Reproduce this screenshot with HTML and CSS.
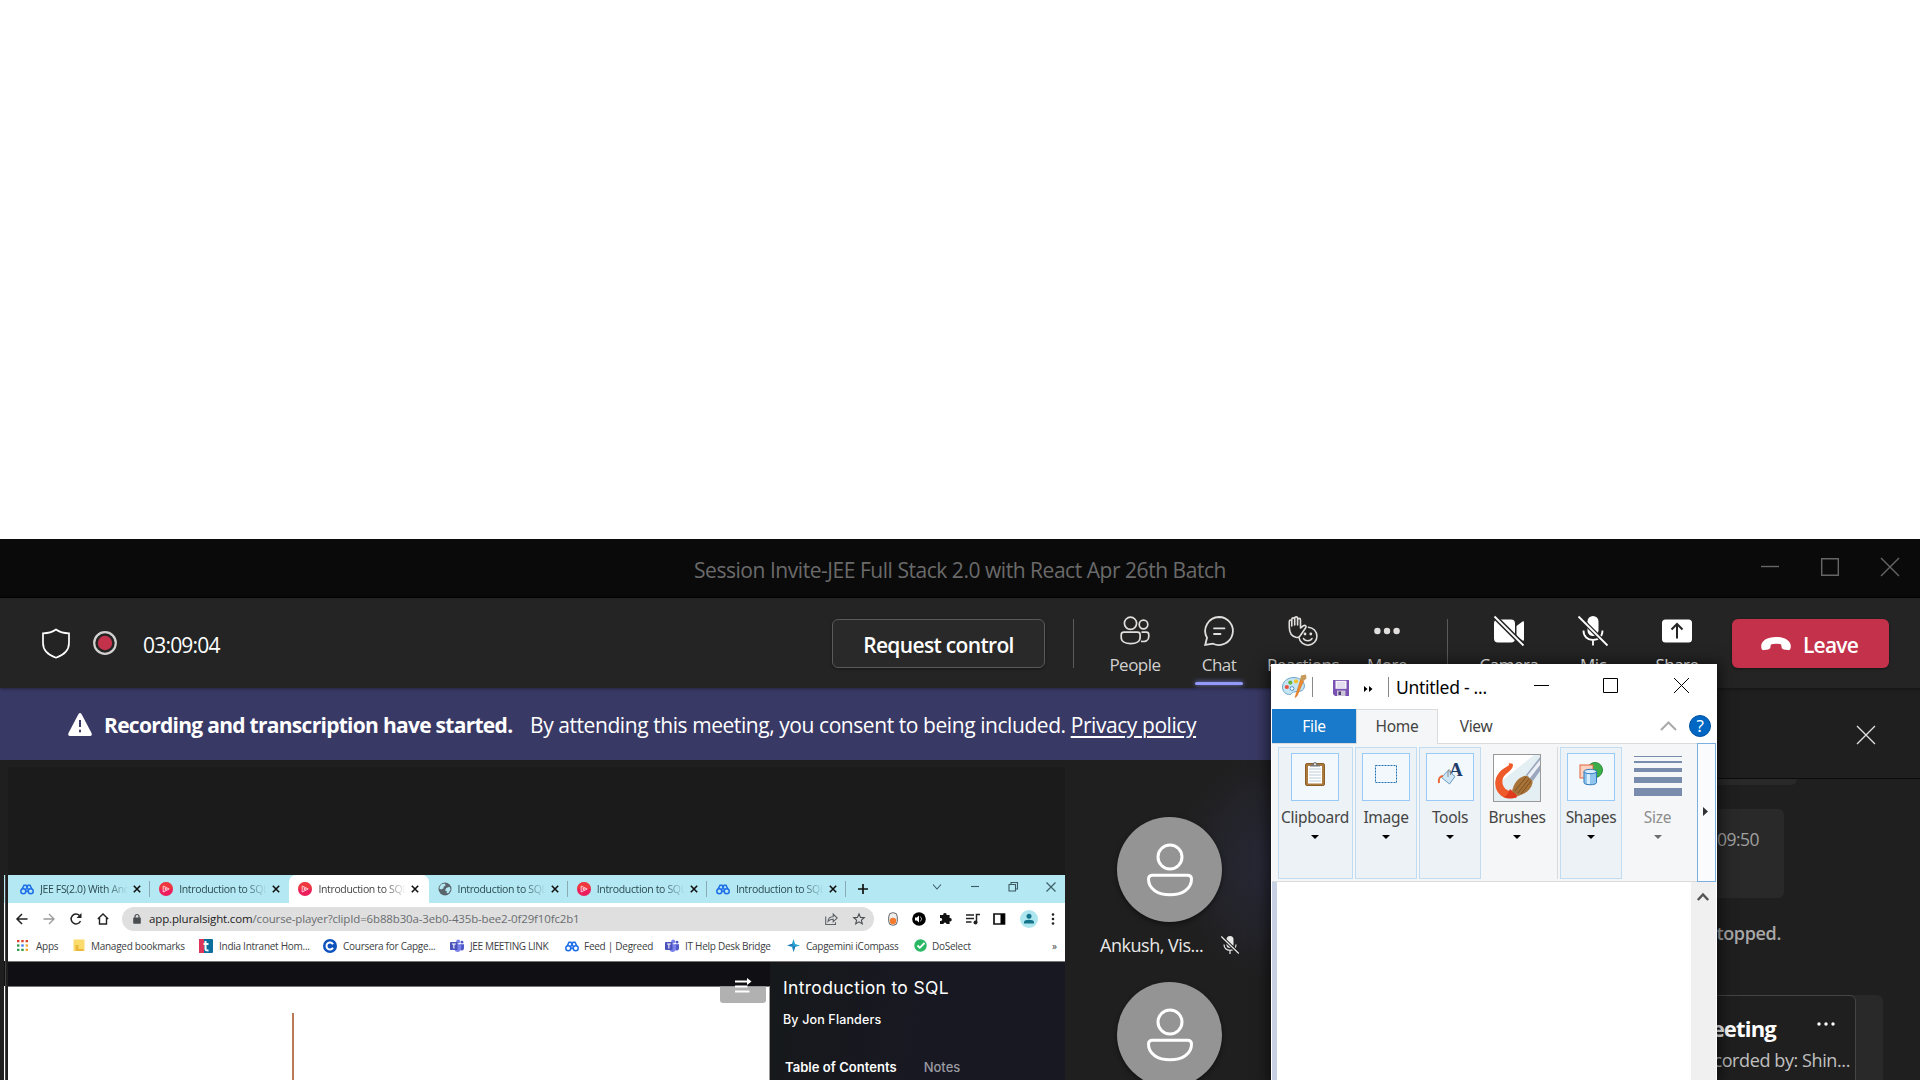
FILE: index.html
```html
<!DOCTYPE html>
<html lang="en">
<head>
<meta charset="utf-8">
<title>Session Invite-JEE Full Stack 2.0 with React Apr 26th Batch</title>
<link rel="stylesheet" href="styles.css">
</head>
<body>
<svg class="defs" aria-hidden="true">
  <symbol id="degreed" viewBox="0 0 14 14"><g fill="none" stroke="#1f6fe8" stroke-width="1.500"><circle cx="3.300" cy="9.200" r="2.500"/><circle cx="10.700" cy="9.200" r="2.500"/><path d="M2.200 6.800 4 3.300h2L7 5l1-1.700h2l1.800 3.500M5.500 7.800 7 5.200l1.500 2.600M5.800 9.200h2.400"/></g></symbol>
  <symbol id="plural" viewBox="0 0 14 14"><circle cx="7" cy="7" r="7" fill="#ec1f5c"/><path d="M0 7a7 7 0 0 1 14 0z" fill="#f04a2a" opacity=".6"/><path d="m4.200 4 6 3-6 3z" fill="none" stroke="#ffc9d3"/><path d="m5.800 5.600 2.800 1.400-2.800 1.400z" fill="#ffc9d3"/></symbol>
  <symbol id="globe" viewBox="0 0 14 14"><circle cx="7" cy="7" r="6.500" fill="#59656b"/><path d="M3 2.600 6.500 1.500l1.300 1.700-2 1.300-.5 2L3 7.400 1.200 6.300zM8.200 6l3.400-1.200 1 2.800-2 3.400-2 .3.200-2.300L7 8.500z" fill="#b4e9f3"/></symbol>
  <symbol id="teams" viewBox="0 0 14 14"><circle cx="8.200" cy="2.500" r="2" fill="#7b83eb"/><circle cx="12" cy="3.200" r="1.400" fill="#5059c9"/><path d="M10 5.200h4v4.300a2.200 2.200 0 0 1-4 1z" fill="#5059c9"/><path d="M4.500 5.200H11V10a3.400 3.400 0 0 1-6.500 1z" fill="#7b83eb"/><rect y="3" width="7.600" height="8" rx=".8" fill="#4b53bc"/><path d="M2 5h3.800M3.900 5v4.400" stroke="#fff" stroke-width="1.100"/></symbol>
  <symbol id="close" viewBox="0 0 8 8"><path d="m.8.8 6.400 6.400m0-6.400L.8 7.200" stroke="#111" stroke-width="1.600"/></symbol>
  <symbol id="person" viewBox="0 0 48 54"><g fill="none" stroke="#fff" stroke-width="3"><circle cx="24" cy="14" r="12"/><path d="M6.500 32.300h35q4 0 4 4C45.500 46 36 51.800 24 51.800S2.500 46 2.500 36.300q0-4 4-4z"/></g></symbol>
</svg>

<main class="meeting">
  <header class="titlebar">
    <h1 class="title">Session Invite-JEE Full Stack 2.0 with React Apr 26th Batch</h1>
    <div class="winctl">
      <svg width="18" height="18" viewBox="0 0 18 18"><path d="M0 8.500h18"/></svg>
      <svg width="18" height="18" viewBox="0 0 18 18"><path d="M.7.7h16.600v16.600H.7z"/></svg>
      <svg width="18" height="18" viewBox="0 0 18 18"><path d="m0 0 18 18M18 0 0 18"/></svg>
    </div>
  </header>

  <nav class="toolbar">
    <svg class="shield" width="28" height="31" viewBox="0 0 28 31"><path d="M14 1.500C10.500 4 6 5.200 1 5.300V15c0 7.500 5 12 13 14.700C22 27 27 22.500 27 15V5.300C22 5.200 17.500 4 14 1.500z" fill="none" stroke="#fff" stroke-width="1.700"/></svg>
    <svg class="rec" width="24" height="24" viewBox="0 0 24 24"><circle cx="12" cy="12" r="10.800" fill="none" stroke="#d2d0ce" stroke-width="2.200"/><circle cx="12" cy="12" r="7.200" fill="#c4314b"/></svg>
    <time class="clock">03:09:04</time>
    <button class="request">Request control</button>
    <i class="rule rule-a"></i>
    <div class="act"><svg width="30" height="30" viewBox="0 0 30 30"><g fill="none" stroke="#e1dfdd" stroke-width="1.700"><circle cx="10.500" cy="7.300" r="6.100"/><circle cx="23.500" cy="8.500" r="4.300"/><path d="M4 16.200h13.500q2.600 0 2.600 2.600v2.700c0 4-4 6.200-9.300 6.200S1.200 25.500 1.200 21.500v-2.700q0-2.600 2.800-2.600zM21.500 16.200h4.700q2.600 0 2.600 2.600v1.700c0 4-3.300 5.400-7.800 4.900"/></g></svg><span>People</span></div>
    <div class="act on"><svg width="30" height="30" viewBox="0 0 30 30"><g fill="none" stroke="#e1dfdd" stroke-width="1.800" stroke-linecap="round"><path d="M15 1a14 14 0 1 1-6 26.700L1.200 29 3 21.800A14 14 0 0 1 15 1zM10 12.300h10.500M10 18h6.500"/></g></svg><span>Chat</span></div>
    <div class="act"><svg width="30" height="30" viewBox="0 0 30 30"><g fill="none" stroke="#e1dfdd" stroke-width="1.600" stroke-linecap="round" stroke-linejoin="round"><path d="M8.500 21.500C3.500 20.500 1.300 16 1.300 11V5.500c0-2 2.500-2 2.500 0V10V3.500c0-2.200 2.900-2.200 2.900 0V9V2.500c0-2.200 2.900-2.200 2.900 0V9V4c0-2.200 2.900-2.200 2.900 0v8l3-2.300c1.800-1 3.300.6 2.200 2L12 20c-.8 1-2 1.700-3.500 1.500z"/><path d="M20.500 11.200A9 9 0 1 1 11 21.500"/><path d="M15.500 22.500c1.500 3 7 3 8.500 0"/></g><circle cx="17" cy="18" r="1.400" fill="#e1dfdd"/><circle cx="22.800" cy="18" r="1.400" fill="#e1dfdd"/></svg><span>Reactions</span></div>
    <div class="act"><svg width="30" height="30" viewBox="0 0 30 30"><g fill="#e1dfdd"><circle cx="5.400" cy="15" r="3.200"/><circle cx="15" cy="15" r="3.200"/><circle cx="24.600" cy="15" r="3.200"/></g></svg><span>More</span></div>
    <i class="rule rule-b"></i>
    <div class="act bright"><svg width="30" height="30" viewBox="0 0 30 30"><path d="M4 3.500h13q4 0 4 4v15q0 4-4 4H4q-4 0-4-4v-15q0-4 4-4zM22.500 10l6-4.500q1.500-.8 1.500 1v17q0 1.800-1.500 1L22.500 20z" fill="#fff"/><path d="m0 0 30 30" stroke="#242424" stroke-width="5"/><path d="m.5.5 29 29" stroke="#fff" stroke-width="1.800"/></svg><span>Camera</span></div>
    <div class="act bright"><svg width="30" height="30" viewBox="0 0 30 30"><rect x="9.500" y="0" width="11" height="20" rx="5.500" fill="#fff"/><path d="M5.500 14.500c0 6 4 9.500 9.500 9.500s9.500-3.500 9.500-9.500M15 24v5.500" fill="none" stroke="#fff" stroke-width="1.800"/><path d="m0 0 30 30" stroke="#242424" stroke-width="4.500"/><path d="m.5.500 29 29" stroke="#fff" stroke-width="1.800"/></svg><span>Mic</span></div>
    <div class="act bright"><svg width="30" height="30" viewBox="0 0 30 30"><rect y="3.500" width="30" height="23" rx="3.500" fill="#fff"/><path d="M15 22.500V8.500M9.500 13.500 15 8l5.500 5.500" fill="none" stroke="#242424" stroke-width="2"/></svg><span>Share</span></div>
    <button class="leave"><svg width="30" height="14" viewBox="0 0 30 14"><path d="M15 0C6 0 0 4 .2 9.500c.1 3 1 4 3.300 3.600l3.700-.7c1.700-.4 2.100-1.200 2.300-2.600l.3-2.300c3-1.100 7.400-1.100 10.400 0l.3 2.300c.2 1.400.6 2.200 2.300 2.600l3.700.7c2.300.4 3.200-.6 3.300-3.600C30 4 24 0 15 0z" fill="#fff"/></svg><span>Leave</span></button>
  </nav>

  <div class="lower">
    <section class="left">
      <div class="banner">
        <svg width="24" height="23" viewBox="0 0 24 23"><path d="M10.500 1q1.500-2 3 0L23.500 20q1 3-1.500 3H2q-2.500 0-1.500-3z" fill="#fff"/><path d="M12 7v7M12 16.800v2.400" stroke="#393966" stroke-width="2"/></svg>
        <b>Recording and transcription have started.</b>
        <span class="consent">By attending this meeting, you consent to being included. <u>Privacy policy</u></span>
      </div>
      <div class="stage">
        <div class="edge"></div>
        <div class="shared">
          <div class="tabs">
            <div class="tab"><svg width="14" height="14"><use href="#degreed"/></svg><span>JEE FS(2.0) With And</span><svg width="8" height="8"><use href="#close"/></svg></div>
            <div class="tab"><svg width="14" height="14"><use href="#plural"/></svg><span>Introduction to SQL</span><svg width="8" height="8"><use href="#close"/></svg></div>
            <div class="tab active"><svg width="14" height="14"><use href="#plural"/></svg><span>Introduction to SQL</span><svg width="8" height="8"><use href="#close"/></svg></div>
            <div class="tab"><svg width="14" height="14"><use href="#globe"/></svg><span>Introduction to SQL</span><svg width="8" height="8"><use href="#close"/></svg></div>
            <div class="tab"><svg width="14" height="14"><use href="#plural"/></svg><span>Introduction to SQL</span><svg width="8" height="8"><use href="#close"/></svg></div>
            <div class="tab"><svg width="14" height="14"><use href="#degreed"/></svg><span>Introduction to SQL</span><svg width="8" height="8"><use href="#close"/></svg></div>
            <svg class="plus" width="10" height="10" viewBox="0 0 10 10"><path d="M5 0v10M0 5h10" stroke="#111" stroke-width="1.700"/></svg>
            <div class="chromectl">
              <svg width="10" height="10" viewBox="0 0 10 10"><path d="m1 2.500 4 4.500 4-4.500"/></svg>
              <svg width="10" height="10" viewBox="0 0 10 10"><path d="M1 4.500h8"/></svg>
              <svg width="10" height="10" viewBox="0 0 10 10"><path d="M1 2.500h6.500V9H1zM3 2.500V.5h6.500V7h-2"/></svg>
              <svg width="10" height="10" viewBox="0 0 10 10"><path d="m.5.500 9 9m0-9-9 9"/></svg>
            </div>
          </div>
          <div class="address">
            <svg width="12" height="12" viewBox="0 0 12 12"><path d="M11.500 6H1M6 1 1 6l5 5" fill="none" stroke="#222" stroke-width="1.500"/></svg>
            <svg width="12" height="12" viewBox="0 0 12 12"><path d="M.5 6H11M6 1l5 5-5 5" fill="none" stroke="#999" stroke-width="1.300"/></svg>
            <svg width="12" height="12" viewBox="0 0 12 12"><path d="M10.500 8A4.900 4.900 0 1 1 9.500 2.500" fill="none" stroke="#222" stroke-width="1.500"/><path d="M11.500 0v5h-5z" fill="#222"/></svg>
            <svg width="12" height="12" viewBox="0 0 12 12"><path d="M.8 6 6 1l5.200 5M2.500 5v6h7V5" fill="none" stroke="#222" stroke-width="1.400"/></svg>
            <div class="pill">
              <svg width="8" height="10" viewBox="0 0 8 10"><path d="M2 4V2.500a2 2 0 0 1 4 0V4" fill="none" stroke="#4a4d50" stroke-width="1.200"/><rect x=".2" y="3.600" width="7.600" height="6.200" rx=".8" fill="#4a4d50"/></svg>
              <span class="url"><em>app.pluralsight.com</em>/course-player?clipId=6b88b30a-3eb0-435b-bee2-0f29f10fc2b1</span>
              <svg width="13" height="12" viewBox="0 0 13 12"><path d="M.7 3.500v8h9.800V9.300M3 8.500c.2-3 2-4.700 5.200-4.700V1l4 4-4 3.800V6.300C6 6.200 4.500 6.800 3 8.500z" fill="none" stroke="#5f6368" stroke-width="1.100"/></svg>
              <svg width="12" height="12" viewBox="0 0 12 12"><path d="m6 .9 1.500 3.500 3.800.3-2.900 2.500.9 3.700L6 8.900l-3.300 2 .9-3.700L.7 4.700l3.800-.3z" fill="none" stroke="#4a4d50" stroke-width="1.100"/></svg>
            </div>
            <svg class="x1" width="10" height="14" viewBox="0 0 10 14"><rect x=".7" y=".7" width="8.600" height="12.600" rx="4" fill="#eee" stroke="#666"/><circle cx="5" cy="9" r="3.200" fill="#f57a2c"/></svg>
            <svg width="14" height="14" viewBox="0 0 14 14"><circle cx="7" cy="7" r="6.800"/><path d="M3 5.500h1.800L7 3.500v7L4.800 8.500H3z" fill="#fff"/><path d="M8.300 4.500q2.800 2.500 0 5" fill="none" stroke="#aaa"/></svg>
            <svg width="13" height="13" viewBox="0 0 13 13"><path d="M1 3h3.300a1.700 1.700 0 1 1 3.300 0h3v3a1.700 1.700 0 1 1 0 3.300V12H7.500a1.500 1.500 0 1 0-3 0H1V9a1.600 1.600 0 1 0 0-3z" fill="#111"/></svg>
            <svg width="14" height="12" viewBox="0 0 14 12"><path d="M0 2h8M0 5.500h8M0 9h5.500M10.500 9.500V1.500H14" fill="none" stroke="#222" stroke-width="1.500"/><circle cx="9.500" cy="9.500" r="2" fill="#222"/></svg>
            <svg width="13" height="12" viewBox="0 0 13 12"><path d="M1 1h10.500v10H1z" fill="none" stroke="#111" stroke-width="1.700"/><path d="M7.500 1h4v10h-4z"/></svg>
            <svg width="18" height="18" viewBox="0 0 18 18"><circle cx="9" cy="9" r="9" fill="#aee6ef"/><circle cx="9" cy="6.300" r="2.500" fill="#14748c"/><path d="M4 13.500V12c0-3 10-3 10 0v1.500z" fill="#14748c"/></svg>
            <svg width="4" height="14" viewBox="0 0 4 14"><g fill="#222"><circle cx="2" cy="2.500" r="1.300"/><circle cx="2" cy="7" r="1.300"/><circle cx="2" cy="11.500" r="1.300"/></g></svg>
          </div>
          <div class="bookmarks">
            <svg width="13" height="13" viewBox="0 0 13 13"><path d="M1 2.200h2.400M5.300 2.200h2.400M9.600 2.200H12" stroke="#d9442f" stroke-width="2.300"/><path d="M1 6.500h2.400" stroke="#2b9a4b" stroke-width="2.300"/><path d="M5.300 6.500h2.400" stroke="#3b7ded" stroke-width="2.300"/><path d="M9.600 6.500H12" stroke="#f0a92e" stroke-width="2.300"/><path d="M1 10.800h2.400M5.300 10.800h2.400" stroke="#2b9a4b" stroke-width="2.300"/><path d="M9.600 10.800H12" stroke="#f0a92e" stroke-width="2.300"/></svg><span>Apps</span>
            <svg width="12" height="13" viewBox="0 0 12 13"><path d="M1 .5h10q.5 0 .5.500v11H.5V1z" fill="#fbdc6b"/><path d="M2.500 6h3v4h5v2h-8z" fill="#e9b83b"/></svg><span>Managed bookmarks</span>
            <svg width="14" height="14" viewBox="0 0 14 14"><rect width="14" height="14" rx="1" fill="#0c6f9e"/><path d="M0 0h5v14H0z" fill="#e0355a"/><path d="M6.500 2v8q0 1.500 3 1.500M4.500 5h5" fill="none" stroke="#fff" stroke-width="2"/></svg><span>India Intranet Hom...</span>
            <svg width="14" height="14" viewBox="0 0 14 14"><circle cx="7" cy="7" r="7" fill="#0d53bd"/><path d="M10 5.200a3.500 3.500 0 1 0 0 3.600" fill="none" stroke="#fff" stroke-width="2"/></svg><span>Coursera for Capge...</span>
            <svg width="14" height="14"><use href="#teams"/></svg><span class="jee">JEE MEETING LINK</span>
            <svg width="14" height="14"><use href="#degreed"/></svg><span>Feed | Degreed</span>
            <svg width="14" height="14"><use href="#teams"/></svg><span>IT Help Desk Bridge</span>
            <svg width="13" height="13" viewBox="0 0 13 13"><path d="m6.500 0 1.600 4.900 4.900 1.600-4.900 1.600L6.500 13 4.900 8.100 0 6.500l4.900-1.600z" fill="#2aa3cf"/><path d="m6.500 6.500 1.600 1.600L6.500 13zM0 6.500h6.500L4.900 4.900z" fill="#1e5fa5"/></svg><span>Capgemini iCompass</span>
            <svg width="13" height="13" viewBox="0 0 13 13"><circle cx="6.500" cy="6.500" r="6.200" fill="#2bb865"/><path d="m3.500 6.500 2.300 2.300L10.500 4" fill="none" stroke="#fff" stroke-width="1.800"/></svg><span>DoSelect</span>
            <span>»</span>
          </div>
          <div class="player">
            <div class="video">
              <div class="slide"><i></i></div>
              <svg class="toggle" width="46" height="26" viewBox="0 0 46 26"><path d="M0 9.500h46V23q0 3-3 3H3q-3 0-3-3z" fill="#b1b1b2"/><path d="M15 4.500h15M15 9.500h12.500M15 14.500h14.500" stroke="#fff" stroke-width="1.800"/><path d="m27 1 4.500 3.500L27 8z" fill="#fff"/></svg>
            </div>
            <aside class="course">
              <h2>Introduction to SQL</h2>
              <p>By Jon Flanders</p>
              <div class="ctabs"><b>Table of Contents</b><span>Notes</span></div>
            </aside>
          </div>
        </div>
        <div class="people">
          <div class="avatar"><svg width="48" height="54"><use href="#person"/></svg></div>
          <div class="name"><span>Ankush, Vis...</span><svg width="18" height="18" viewBox="0 0 18 18"><rect x="5.500" y="0" width="7" height="12" rx="3.500" fill="#e8e8e8"/><path d="M3 8.500c0 3.500 2.500 5.800 6 5.800s6-2.300 6-5.800M9 14.500V18" fill="none" stroke="#e8e8e8" stroke-width="1.200"/><path d="m0 .5 18 17" stroke="#1f1f1f" stroke-width="3.500"/><path d="m.3.500 17.500 17" stroke="#e8e8e8" stroke-width="1.200"/></svg></div>
          <div class="avatar"><svg width="48" height="54"><use href="#person"/></svg></div>
        </div>
      </div>
    </section>
    <aside class="chat">
      <header><svg width="18" height="18" viewBox="0 0 18 18"><path d="m0 0 18 18M18 0 0 18" stroke="#e1e1e1" stroke-width="1.300"/></svg></header>
      <div class="stub"></div>
      <div class="msg">09:50</div>
      <p class="stopped">stopped.</p>
      <div class="card"><div class="inner"><div class="head"><b>Meeting</b><svg width="18" height="4" viewBox="0 0 18 4"><g fill="#fff"><circle cx="2" cy="2" r="1.700"/><circle cx="9" cy="2" r="1.700"/><circle cx="16" cy="2" r="1.700"/></g></svg></div><p>Recorded by: Shin...</p></div></div>
    </aside>
  </div>
</main>

<section class="paint">
  <header class="ptitle">
    <svg width="25" height="24" viewBox="0 0 25 24"><path d="M12 3.500C5 3.500.5 8 .5 13S4 20.500 7.500 20.500c2.500 0 2-2 4-2.500 3.500-.8 9 .5 10.500-4C24 9.500 19 3.500 12 3.500z" fill="#c5e5f5" stroke="#6aa5c9"/><circle cx="4.800" cy="13" r="2.100" fill="#e8533f"/><circle cx="8.300" cy="8.600" r="2.100" fill="#67b544"/><circle cx="14" cy="7.300" r="2.100" fill="#f3c32c"/><circle cx="10" cy="14.500" r="1.900" fill="#fff" stroke="#4c92c4"/><path d="M13 23.500 18.500 6l3 1-6.500 15z" fill="#ef8b2c" stroke="#d96c1a" stroke-width=".6"/><path d="m18 6 1-4.500 5-1 .5 4L21.500 7z" fill="#c79a5d"/></svg>
    <i class="s1"></i>
    <svg class="floppy" width="16" height="16" viewBox="0 0 16 16"><path d="M0 0h16v16H2l-2-2z" fill="#7a52b3"/><path d="M2.500.800h11v8h-11z" fill="#f5f2fa"/><path d="M4 3h8M4 5h8M4 7h8" stroke="#c9bcdf" stroke-width=".8"/><path d="M4 10.500h8.500V16H4z" fill="#cbc5d6"/><path d="M5.500 11.500h2.500V15H5.500z" fill="#4f3d78"/></svg>
    <svg class="dbl" width="9" height="6" viewBox="0 0 9 6"><path d="M0 0v6l3.500-3zM5 0v6l3.500-3z"/></svg>
    <i class="s2"></i>
    <span>Untitled - ...</span>
    <svg class="c1" width="15" height="15" viewBox="0 0 15 15"><path d="M0 7.500h15"/></svg>
    <svg class="c2" width="15" height="15" viewBox="0 0 15 15"><path d="M.5.500h14v14H.5z"/></svg>
    <svg class="c3" width="15" height="15" viewBox="0 0 15 15"><path d="m0 0 15 15m0-15L0 15"/></svg>
  </header>
  <nav class="ptabs">
    <span class="file">File</span><span class="home">Home</span><span class="view">View</span>
    <svg class="fold" width="17" height="10" viewBox="0 0 17 10"><path d="m1 9 7.500-7.500L16 9" fill="none" stroke="#aaa" stroke-width="2"/></svg>
    <span class="help">?</span>
  </nav>
  <div class="ribbon">
    <div class="group clip"><div class="pic"><svg width="20" height="24" viewBox="0 0 20 24"><rect x=".5" y="1.500" width="19" height="22" rx="1.500" fill="#ad7a3e" stroke="#8b5d2a"/><path d="M3 4h14v17.500H3z" fill="#fff"/><path d="M4 7h12M4 10h12M4 13h12M4 16h12M4 19h12" stroke="#b9ccd8"/><path d="M5 4.500Q5 2 8 2q.5-2 2-2t2 2q3 0 3 2.500z" fill="#777"/><circle cx="10" cy="2.300" r="1" fill="#eee"/></svg></div><span>Clipboard</span></div>
    <div class="group"><div class="pic"><svg width="22" height="18" viewBox="0 0 22 18"><path d="M.5.500h21v17H.5z" fill="none" stroke="#1b6fb0" stroke-dasharray="2 1"/></svg></div><span>Image</span></div>
    <div class="group"><div class="pic"><svg width="24" height="24" viewBox="0 0 24 24"><text x="11" y="14" class="glyph">A</text><path d="m3.500 15.500 6.500-7 7 6-5.500 7.500z" fill="#cfe6f7" stroke="#6d9cc4"/><path d="M10 15V9l1-1.500L12.500 9v4" fill="none" stroke="#888"/><path d="M1 21C.3 16 1.500 14.500 5 14" fill="none" stroke="#ea6a35" stroke-width="2"/></svg></div><span>Tools</span></div>
    <div class="group plain"><div class="pic"><svg width="46" height="46" viewBox="0 0 46 46"><path d="M0 0h46v46H0z" fill="#e4eff4"/><path d="M0 0h40L0 32z" fill="#fff"/><path d="M19 10.500c.5-2-3-3-5-1.500 2 0 1 1.500-1 2.500C5 15.500 0 23 1.500 31c1 6 5 10 10 12h11l-1-6c-9 0-14-5-13-12 1-7 10-8.500 10.500-14.500z" fill="#ee5a2a"/><path d="M10 42c3-1 4-4 6-8l8 7c-4 3-10 3.500-14 1z" fill="#e03b1a"/><path d="M18 36c2-8 6-13 12-15 4-1 9 2 8.500 7C37 35 31 39 24 41z" fill="#a87339"/><path d="m21 36 11-14M24 38l11-14M27 39l10-13" stroke="#7e5222" stroke-width="1"/><path d="M32 20 46 2v14L39 26z" fill="#9ba7bd"/><path d="M33.500 20.500 46 5v5L36 23z" fill="#edf1f7"/></svg></div><span>Brushes</span></div>
    <i></i>
    <div class="group"><div class="pic"><svg width="24" height="24" viewBox="0 0 24 24"><circle cx="16" cy="8" r="7.500" fill="#3cae49" stroke="#2a8c38"/><rect x="1" y="3" width="13" height="13" fill="#fbd2c0" stroke="#e3643a"/><path d="M5 9.500v11c0 3 12.500 3 12.500 0v-11z" fill="#8fc5ee" stroke="#2e78bb"/><path d="M8 11v11h3V11z" fill="#d9eefc"/><ellipse cx="11.250" cy="9.500" rx="6.250" ry="2.200" fill="#d9eefc" stroke="#2e78bb"/></svg></div><span>Shapes</span></div>
    <div class="group plain size"><svg width="48" height="48" viewBox="0 0 48 48"><path d="M0 3h48v1H0zM0 8h48v2H0zM0 15h48v4H0zM0 24h48v6H0zM0 35h48v8H0z" fill="#7a8cad"/></svg><span>Size</span></div>
    <div class="next"><svg width="5" height="9" viewBox="0 0 5 9"><path d="M0 0v9l5-4.500z" fill="#333"/></svg></div>
  </div>
  <div class="canvas"><div class="sheet"></div><div class="scroll"><svg width="12" height="9" viewBox="0 0 12 9"><path d="M.8 8 6 2.500 11.200 8" fill="none" stroke="#555" stroke-width="2.500"/></svg></div></div>
</section>
</body>
</html>
```
FILE: styles.css
```css
* { box-sizing: border-box; margin: 0; padding: 0; }
html, body { width: 1920px; height: 1080px; overflow: hidden; background: #fff; }
body { position: relative; font-family: "Open Sans", "Noto Sans", sans-serif; color: #fff; white-space: nowrap; }
svg { display: block; flex: none; overflow: visible; }
i { flex: none; font-style: normal; }
button { font: inherit; color: inherit; border: 0; }
.defs { position: absolute; width: 0; height: 0; }

.meeting { margin-top: 539px; height: 541px; background: #1f1f1f; overflow: hidden; }

.titlebar { display: grid; grid-template-columns: 1fr auto 1fr; height: 59px; background: #0a0a0a; border-bottom: 1px solid #000; }
.title { grid-column: 2; font-size: 21px; font-weight: 400; letter-spacing: -.46px; line-height: 62px; height: 58px; color: #6a6a6a; }
.winctl { display: flex; justify-content: flex-end; gap: 42px; padding: 19px 21px 0 0; }
.winctl svg { fill: none; stroke: #666; stroke-width: 1.4; }

.toolbar { display: flex; align-items: flex-start; height: 90px; padding-left: 42px; background: #242424; box-shadow: 0 1px 3px #0006; position: relative; }
.shield { margin-top: 30px; }
.rec { margin: 33px 0 0 23px; }
.clock { flex: none; width: 688px; padding-left: 26px; font-size: 21px; letter-spacing: -.8px; line-height: 94px; }
.request { flex: none; width: 213px; height: 49px; margin: 21px 0 0 27px; border: 1px solid #5a5a5a; border-radius: 6px; background: #292929; font-size: 21px; font-weight: 600; letter-spacing: -.67px; line-height: 47px; padding-top: 2px; box-shadow: 0 1px 3px #0006; }
.rule { width: 1px; height: 49px; margin-top: 21px; background: #5a5a5a; }
.rule-a { margin-left: 28px; margin-right: 19px; }
.rule-b { margin-left: 18px; margin-right: 19px; }
.act { flex: none; display: flex; flex-direction: column; align-items: center; width: 84px; height: 90px; padding-top: 18px; color: #d2d0ce; font-size: 17px; letter-spacing: -.5px; line-height: 22px; }
.act span { margin-top: 8px; }
.bright { color: #fff; }
.on::after { content: ""; width: 48px; height: 3px; margin-top: 6px; border-radius: 2px; background: #9299f7; box-shadow: 0 0 5px #7b83eb; }
.leave { display: flex; align-items: center; width: 157px; height: 49px; margin: 21px 0 0 13px; padding-left: 29px; gap: 12px; border-radius: 6px; background: #c4314b; font-size: 21px; font-weight: 600; letter-spacing: -.8px; box-shadow: 0 1px 3px #0006; }
.leave span { padding-top: 2px; }

.lower { display: flex; height: 392px; }
.left { width: 1300px; flex: none; }
.banner { display: flex; align-items: center; height: 72px; padding-left: 68px; background: #393966; font-size: 21px; }
.banner b { width: 426px; margin-left: 12px; padding-top: 2px; font-weight: 700; letter-spacing: -.72px; }
.consent { padding-top: 2px; letter-spacing: -.43px; }
.banner u { text-underline-offset: 3px; text-decoration-thickness: 2px; }

.stage { display: flex; height: 320px; padding-left: 4px; background: radial-gradient(ellipse 110px 120px at 1285px 105px, #2a2a3c, #1f1f1f); }
.edge { width: 2px; margin: 115px 2px 0 0; background: linear-gradient(#b4e9f3 28px, #fff 28px, #fff 86px, #111 86px, #111 111px, #fff 111px); border-right: 1px solid #444; }
.shared { width: 1057px; margin-top: 7px; padding-top: 108px; background: #1b1b1b; }

.tabs { display: flex; align-items: center; height: 28px; padding-left: 3px; background: #b4e9f3; }
.tab { flex: none; display: flex; align-items: center; width: 139.200px; height: 28px; padding-left: 9px; color: #2c4a52; font-size: 10.500px; letter-spacing: -.35px; border-right: 1px solid transparent; }
.tab span { width: 88px; margin: 0 5px 0 6px; overflow: hidden; mask-image: linear-gradient(90deg, #000 75%, transparent); }
.tab:not(.active) { border-image: linear-gradient(transparent 22%, #8aabb3 22%, #8aabb3 78%, transparent 78%) 1; }
.tab:nth-child(2) { border-image: none; }
.tab.active { background: #fff; border-radius: 7px 7px 0 0; color: #444; }
.plus { margin: 0 64px 0 12px; }
.chromectl { display: flex; gap: 28px; height: 16px; }
.chromectl svg { margin-top: 1px; fill: none; stroke: #3b5a63; stroke-width: 1.1; }

.address { display: flex; align-items: center; height: 31px; padding-left: 8px; gap: 15px; background: #fff; }
.pill { flex: none; display: flex; align-items: center; width: 752px; height: 24px; margin-left: -2px; padding: 0 9px 0 11px; border-radius: 12px; background: #dfdfdf; }
.pill .url { width: 676px; margin-left: 8px; font-size: 11.500px; letter-spacing: -.15px; color: #6a6d70; }
.pill .url em { font-style: normal; color: #222; }
.pill svg:last-child { margin-left: 15px; }
.address .x1 { margin-left: -1px; }
.address > svg { margin-right: -1.500px; }
.address > svg:nth-child(-n+4) { margin-right: 0; }

.bookmarks { display: grid; grid-template-columns: 20px 37px 18px 108px 20px 104px 20px 107px 20px 95px 19px 81px 20px 102px 19px 108px 18px 120px 1fr; align-items: center; height: 28px; padding: 0 0 4px 8px; background: #fff; border-bottom: 1px solid #777; color: #3c4043; font-size: 10px; letter-spacing: -.27px; }
.bookmarks .jee { letter-spacing: -.35px; }

.player { display: flex; height: 118px; }
.video { position: relative; width: 762px; padding-top: 24px; background: #101014; }
.slide { height: 94px; padding: 26px 0 0 284px; background: #fff; border-top: 1px solid #777; border-right: 1px solid #999; }
.slide i { display: block; width: 1.500px; height: 70px; background: #bd7a57; }
.toggle { position: absolute; left: 712px; top: 15px; }
.course { width: 295px; padding: 13px 0 0 13px; background: linear-gradient(100deg, #16191b, #181823 60%); font-family: "Inter", sans-serif; }
.course h2 { font-size: 17.500px; font-weight: 400; letter-spacing: .32px; line-height: 26px; }
.course p { margin-top: 10px; font-size: 12.500px; font-weight: 500; letter-spacing: .15px; line-height: 18px; }
.ctabs { display: flex; gap: 27px; margin: 29px 0 0 2px; font-size: 13px; line-height: 18px; }
.ctabs b { font-weight: 600; letter-spacing: .04px; }
.ctabs span { color: #9a9ba1; font-weight: 500; }

.people { display: flex; flex-direction: column; padding: 57px 0 0 35px; }
.avatar { flex: none; display: flex; align-items: center; justify-content: center; width: 105px; height: 105px; margin-left: 17px; border-radius: 50%; background: #949494; box-shadow: 0 2px 5px #0007; }
.name { flex: none; display: flex; align-items: center; height: 60px; padding-bottom: 14px; font-size: 18px; letter-spacing: -.47px; color: #e8e8e8; }
.name span { width: 121px; }

.chat { flex: 1; background: #1f1f1f; }
.chat header { display: flex; justify-content: flex-end; height: 91px; padding: 38px 45px 0 0; border-bottom: 1px solid #0c0c0c; }
.stub { width: 497px; height: 6px; border-radius: 0 0 7px 7px; background: #292929; }
.msg { width: 484px; height: 89px; margin-top: 24px; padding: 17px 25px 0 0; border-radius: 6px; background: #292929; color: #a0a0a0; font-size: 17.500px; letter-spacing: -.5px; line-height: 26px; text-align: right; }
.stopped { width: 481px; margin-top: 21px; color: #a8a8a8; font-size: 18px; font-weight: 600; letter-spacing: -.35px; line-height: 28px; text-align: right; }
.card { width: 583px; margin-top: 48px; border-radius: 6px; background: #292929; }
.inner { width: 556px; height: 100px; padding: 16px 5px 0 0; border: 1px solid #454545; border-radius: 6px; background: #1f1f1f; }
.head { display: flex; justify-content: flex-end; gap: 41px; padding-right: 15px; line-height: 32px; font-size: 22px; letter-spacing: -.8px; }
.head svg { margin-top: 10px; }
.inner p { font-size: 18px; letter-spacing: -.4px; line-height: 32px; color: #c0c0c0; text-align: right; }

.paint { position: absolute; left: 1271px; top: 664px; width: 446px; height: 416px; padding: 0 1px; background: #fff; color: #444; box-shadow: 0 2px 14px 3px #0009; font-family: "Noto Sans", sans-serif; }
.ptitle { display: flex; align-items: center; height: 45px; padding-left: 10px; color: #000; font-size: 17.500px; letter-spacing: -.28px; }
.ptitle svg { margin-bottom: 1px; }
.ptitle i { width: 1px; height: 20px; background: #888; }
.ptitle span { width: 138px; margin-left: 7px; padding-top: 1px; }
.ptitle .c1, .ptitle .c2, .ptitle .c3 { fill: none; stroke: #000; margin-bottom: 2px; }
.ptitle .floppy { margin: 3px 0 0 20px; }
.ptitle .dbl { margin: 4px 0 0 15px; }
.s1 { margin-left: 5px; }
.s2 { margin-left: 15px; }
.c2 { margin-left: 54px; }
.c3 { margin-left: 56px; }
.ptabs { display: flex; align-items: center; height: 34px; font-size: 15.500px; letter-spacing: -.3px; line-height: 34px; text-align: center; }
.file { width: 84px; background: #1979ca; color: #fff; }
.home { width: 82px; height: 35px; background: #f5f6f7; border: 1px solid #dadbdc; border-bottom: 0; line-height: 32px; }
.view { width: 76px; }
.fold { margin-left: 146px; }
.help { width: 22px; height: 22px; margin-left: 12px; border-radius: 50%; background: #0067c5; border: 1px solid #004f9e; color: #fff; font-size: 17px; line-height: 20px; }

.ribbon { display: flex; height: 139px; gap: 2px; padding-left: 6px; background: #f5f6f7; border: solid #dadbdc; border-width: 1px 0; }
.group { flex: none; display: flex; flex-direction: column; align-items: center; width: 62px; height: 132px; margin-top: 3px; padding-top: 5px; background: #ecf2f6; border: 1px solid #c0dcf3; font-size: 15.500px; letter-spacing: -.3px; line-height: 22px; }
.group span { margin: 5px 0 7px; }
.group::after { content: ""; border: 4px solid transparent; border-top-color: #000; border-bottom: 0; }
.clip { width: 75px; padding-right: 1px; }
.pic { display: flex; align-items: center; justify-content: center; width: 48px; height: 48px; padding-bottom: 7px; background: #f3f8fc; border: 1px solid #98c9f7; }
.plain { width: 71px; background: none; border-color: transparent; }
.plain .pic { padding: 0; border-color: #999; margin: 1px 0 -1px; }
.group.plain:nth-child(4) { padding-right: 3px; }
.ribbon > i { width: 1px; height: 132px; margin: 3px 0 0 1px; background: #dadbdc; }
.group.size { width: 68px; padding-right: 1px; color: #8d8d8d; }
.size::after { border-top-color: #6d6d6d; }
.next { display: flex; align-items: center; justify-content: center; width: 19px; height: 139px; margin: -1px 0 0 auto; padding: 0 2px 3px 0; background: #f9fbfd; border: 1px solid #7aafe0; }
.glyph { font: bold 19px "Liberation Serif", serif; fill: #1e3d6b; }
.canvas { display: flex; height: 198px; background: #c8d1e4; padding-left: 5px; }
.sheet { flex: 1; background: #fff; }
.scroll { width: 25px; padding: 10px 0 0 6px; background: #f0f0f0; }
```
